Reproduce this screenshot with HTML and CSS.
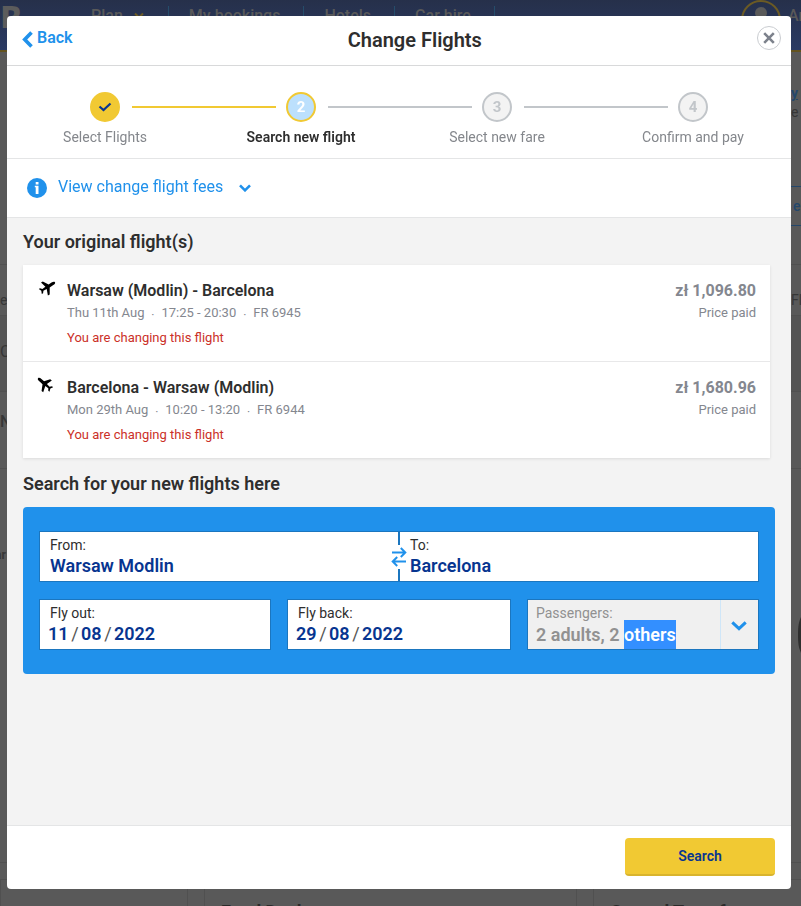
FILE: index.html
```html
<!DOCTYPE html>
<html lang="en">
<head>
<meta charset="utf-8">
<meta name="viewport" content="width=device-width, initial-scale=1">
<title>Change Flights</title>
<link rel="stylesheet" href="styles.css">
</head>
<body>
<div class="page" aria-hidden="true">
  <div class="topbar">
    <span class="logo">R</span>
    <div class="nav">
      <span class="nav-item">Plan
        <svg width="12" height="8" viewBox="0 0 12 8"><path d="M2 1.5l4 4 4-4" fill="none" stroke="#6b5a24" stroke-width="2"/></svg>
      </span>
      <span class="nav-item">My bookings</span>
      <span class="nav-item">Hotels</span>
      <span class="nav-item">Car hire</span>
    </div>
    <div class="account">
      <svg width="40" height="40" viewBox="0 0 40 40"><circle cx="20" cy="20" r="19" fill="none" stroke="#6b5a24" stroke-width="2"/><circle cx="20" cy="13" r="6" fill="#5a5a5a"/><path d="M8 31c1-8 6-10 12-10s11 2 12 10" fill="#5a5a5a"/></svg>
      <span>An</span>
    </div>
  </div>
  <div class="strip strip-intro"><span></span><div class="edge"><b class="edge-link">y</b><span>e</span></div></div>
  <div class="strip strip-button"><span></span><div class="edge edge-button">e</div></div>
  <div class="strip strip-tabs"><span>e</span><div class="edge">Fl</div></div>
  <div class="strip strip-city"><span>C</span><div class="edge"></div></div>
  <div class="strip strip-name"><span>N</span><div class="edge"></div></div>
  <div class="strip strip-seat"><b>ar</b><div class="edge edge-photo"><svg width="4" height="40" viewBox="0 0 4 40"><path d="M4 0C1 6 0 10 0 20s1 14 4 20z" fill="#2e2e2e"/></svg></div></div>
  <div class="rule"></div>
  <div class="tiles">
    <div class="tile"></div>
    <div class="tile">Food Deals</div>
    <div class="tile">Ground Transfers</div>
  </div>
</div>

<div class="overlay">
  <form class="modal" role="dialog" aria-modal="true" aria-labelledby="title">
    <header class="modal-head">
      <button type="button" class="back">
        <svg width="11" height="17" viewBox="0 0 11 17" aria-hidden="true"><path d="M9.500 1.500L2.700 8.500l6.800 7" fill="none" stroke="currentColor" stroke-width="3.600"/></svg>
        Back
      </button>
      <h1 id="title">Change Flights</h1>
      <button type="button" class="close" aria-label="Close">
        <svg width="12" height="12" viewBox="0 0 12 12" aria-hidden="true"><path d="M1.200 1.200l9.600 9.600M10.800 1.200l-9.600 9.600" stroke="currentColor" stroke-width="2.600"/></svg>
      </button>
    </header>

    <ol class="steps">
      <li class="step done">
        <div class="track"><i></i><span class="dot"><svg width="14" height="10" viewBox="0 0 14 10" aria-label="Done"><path d="M1.500 4.500L5.500 8l7-6.500" fill="none" stroke="#073590" stroke-width="2.200"/></svg></span><i></i></div>
        <span>Select Flights</span>
      </li>
      <li class="step current" aria-current="step">
        <div class="track"><i></i><span class="dot">2</span><i></i></div>
        <span>Search new flight</span>
      </li>
      <li class="step">
        <div class="track"><i></i><span class="dot">3</span><i></i></div>
        <span>Select new fare</span>
      </li>
      <li class="step">
        <div class="track"><i></i><span class="dot">4</span><i></i></div>
        <span>Confirm and pay</span>
      </li>
    </ol>

    <button type="button" class="fees" aria-expanded="false">
      <svg width="20" height="20" viewBox="0 0 20 20" aria-hidden="true"><circle cx="10" cy="10" r="10" fill="#2091eb"/><path d="M8.700 4h2.800v2.400H8.700zM7.800 7.700h3.700V16H8.700V9.200h-.9z" fill="#fff"/></svg>
      <span>View change flight fees</span>
      <svg width="12" height="8" viewBox="0 0 12 8" aria-hidden="true"><path d="M1 1.300l5 5 5-5" fill="none" stroke="#2091eb" stroke-width="2.600"/></svg>
    </button>

    <main class="body">
      <h2>Your original flight(s)</h2>
      <ul class="flights">
        <li class="flight">
          <svg class="plane" viewBox="0 0 18 18" aria-hidden="true"><path d="M17 2.200c-.8-.8-2.200-.4-3.500.4L10.600 4.500 4.800 1.500 3 2.500l4.400 4.200-3 2.300L2 8.300l-1.200.8 2.500 1.700.5 3.200 1.300-.7.300-2.500 3.300-1.900 1.200 6.600 1.800-1V7.600l3.600-2.500c1.300-.9 2.300-2.100 1.700-2.900z"/></svg>
          <div class="route">
            <h3>Warsaw (Modlin) - Barcelona</h3>
            <p class="meta"><span>Thu 11th Aug</span><i>·</i><span>17:25 - 20:30</span><i>·</i><span>FR 6945</span></p>
            <p class="notice">You are changing this flight</p>
          </div>
          <div class="price"><strong>zł 1,096.80</strong><span>Price paid</span></div>
        </li>
        <li class="flight">
          <svg class="plane plane-back" viewBox="0 0 18 18" aria-hidden="true"><path d="M17 2.200c-.8-.8-2.200-.4-3.500.4L10.600 4.500 4.800 1.500 3 2.500l4.400 4.200-3 2.300L2 8.300l-1.200.8 2.500 1.700.5 3.200 1.300-.7.300-2.500 3.300-1.900 1.200 6.600 1.800-1V7.600l3.600-2.500c1.300-.9 2.300-2.100 1.700-2.900z"/></svg>
          <div class="route">
            <h3>Barcelona - Warsaw (Modlin)</h3>
            <p class="meta"><span>Mon 29th Aug</span><i>·</i><span>10:20 - 13:20</span><i>·</i><span>FR 6944</span></p>
            <p class="notice">You are changing this flight</p>
          </div>
          <div class="price"><strong>zł 1,680.96</strong><span>Price paid</span></div>
        </li>
      </ul>

      <h2>Search for your new flights here</h2>
      <section class="search">
        <div class="airports">
          <div class="field">
            <label for="from">From:</label>
            <input id="from" type="text" value="Warsaw Modlin">
          </div>
          <div class="field">
            <label for="to">To:</label>
            <input id="to" type="text" value="Barcelona">
          </div>
          <button type="button" class="swap" aria-label="Swap airports">
            <svg width="16" height="20" viewBox="0 0 16 20" aria-hidden="true"><path d="M1 5.500h13M9.800 1l4.500 4.500L9.800 10M15 14.500H2M6.200 10l-4.500 4.500L6.200 19" fill="none" stroke="#2091eb" stroke-width="2"/></svg>
          </button>
        </div>
        <div class="details">
          <div class="field" role="group" aria-labelledby="out">
            <label id="out" for="out-day">Fly out:</label>
            <div class="date">
              <input id="out-day" type="text" value="11"><span>/</span><input type="text" value="08" aria-label="Month"><span>/</span><input class="year" type="text" value="2022" aria-label="Year">
            </div>
          </div>
          <div class="field" role="group" aria-labelledby="ret">
            <label id="ret" for="ret-day">Fly back:</label>
            <div class="date">
              <input id="ret-day" type="text" value="29"><span>/</span><input type="text" value="08" aria-label="Month"><span>/</span><input class="year" type="text" value="2022" aria-label="Year">
            </div>
          </div>
          <button type="button" class="passengers" aria-haspopup="listbox">
            <span class="pax"><span class="pax-label">Passengers:</span><span class="pax-value">2 adults, 2 <mark>others</mark></span></span>
            <span class="pax-arrow"><svg width="16" height="10" viewBox="0 0 16 10" aria-hidden="true"><path d="M1.300 1.300L8 7.700l6.700-6.400" fill="none" stroke="#2091eb" stroke-width="3"/></svg></span>
          </button>
        </div>
      </section>
    </main>

    <footer class="modal-foot">
      <button type="submit" class="submit">Search</button>
    </footer>
  </form>
</div>
</body>
</html>
```

FILE: styles.css
```css
* {
  box-sizing: border-box;
}

body,
h1,
h2,
h3,
p,
ul,
ol {
  margin: 0;
  padding: 0;
}

ul,
ol {
  list-style: none;
}

body {
  height: 100vh;
  overflow: hidden;
  background: #595959;
  color: #2e2e2e;
  font-family: Roboto, "Liberation Sans", sans-serif;
  font-size: 14px;
}

button,
input {
  border: 0;
  padding: 0;
  background: none;
  color: inherit;
  font: inherit;
}

svg {
  display: block;
  flex: none;
}

i {
  font-style: normal;
}

/* Dimmed page behind the dialog */

.page {
  height: 100vh;
  display: flex;
  flex-direction: column;
  overflow: hidden;
  color: #363636;
}

.topbar {
  display: flex;
  align-items: flex-start;
  height: 52px;
  border-bottom: 2px solid #63531f;
  background: linear-gradient(#26304a, #2a3a63);
  color: #595959;
  font-size: 16px;
  font-weight: 500;
  line-height: 20px;
}

.logo {
  width: 71px;
  font: bold 30px/36px "DejaVu Sans", sans-serif;
  color: #5c5c5c;
}

.nav {
  display: flex;
  flex: 1;
  padding-top: 6px;
}

.nav-item {
  display: flex;
  align-items: center;
  gap: 10px;
  padding: 0 23px 0 20px;
  border-right: 1px solid #254d6b;
}

.account {
  display: flex;
  gap: 7px;
  width: 60px;
  line-height: 32px;
  white-space: nowrap;
}

.strip {
  display: flex;
  flex: none;
  justify-content: space-between;
  border-bottom: 1px solid #505050;
}

.edge {
  width: 10px;
  white-space: nowrap;
}

.strip-intro {
  height: 134px;
  padding-top: 32px;
  border: 0;
  line-height: 19px;
}

.edge-link {
  display: block;
  color: #24476b;
  text-decoration: underline;
}

.strip-button {
  height: 79px;
}

.edge-button {
  height: 40px;
  padding-left: 2px;
  border: solid #24476b;
  border-width: 1px 0;
  color: #24476b;
  font-weight: 500;
  line-height: 38px;
}

.strip-tabs {
  height: 51px;
  line-height: 70px;
}

.strip-city {
  height: 76px;
  background: #545454;
  font-size: 16px;
  line-height: 72px;
}

.strip-name {
  height: 77px;
  font-size: 16px;
  font-weight: 500;
  line-height: 60px;
}

.strip-seat {
  flex: 1;
  padding-top: 78px;
  font-size: 12px;
  line-height: 16px;
}

.strip-seat b {
  margin-left: -5px;
}

.edge-photo {
  padding: 68px 0 0 7px;
}

.rule {
  height: 17px;
  border-bottom: 1px solid #505050;
}

.tiles {
  display: flex;
  gap: 16px;
  height: 26px;
}

.tile {
  flex: none;
  width: 373px;
  padding: 22px 0 0 16px;
  border: solid #505050;
  border-width: 0 1px;
  color: #2a2a2a;
  font-size: 18px;
  font-weight: 700;
  line-height: 20px;
}

.tile:first-child {
  width: 188px;
}

/* Dialog */

.overlay {
  position: fixed;
  inset: 0;
  display: flex;
  padding: 16px 10px 17px 7px;
}

.modal {
  display: flex;
  flex: 1;
  flex-direction: column;
  overflow: hidden;
  border-radius: 4px;
  background: #fff;
}

.modal-head {
  display: grid;
  grid-template-columns: auto 1fr auto;
  align-items: center;
  height: 50px;
  padding: 0 10px 2px 15px;
  border-bottom: 1px solid #d8d9da;
}

.modal-head h1 {
  font-size: 20px;
  font-weight: 600;
  line-height: 24px;
  text-align: center;
}

.back {
  display: flex;
  gap: 4px;
  align-items: center;
  padding-bottom: 4px;
  color: #2091eb;
  font-size: 16px;
  font-weight: 600;
  line-height: 20px;
}

.back svg {
  margin-top: 4px;
}

.close {
  display: grid;
  place-items: center;
  width: 24px;
  height: 24px;
  margin-bottom: 4px;
  border: 1px solid #c9ccd0;
  border-radius: 50%;
  color: #7d828c;
}

.steps {
  display: grid;
  grid-template-columns: repeat(4, 1fr);
  padding: 26px 0 13px;
  border-bottom: 1px solid #e4e5e6;
  color: #84878c;
  line-height: 16px;
  text-align: center;
}

.track {
  display: flex;
  align-items: center;
  margin: 0 -1px 7px 1px;
}

.track i {
  flex: 1;
  height: 2px;
  margin: 0 10px 0 0;
  background: #c2c6ca;
}

.track i:last-child {
  margin: 0 0 0 12px;
}

.step:first-child i:first-child,
.step:last-child i:last-child {
  visibility: hidden;
}

.dot {
  display: grid;
  place-items: center;
  width: 30px;
  height: 30px;
  border: 2px solid #c2c6ca;
  border-radius: 50%;
  background: #f3f3f3;
  color: #c2c6ca;
  font-size: 15px;
  font-weight: 700;
}

.done i,
.current i:first-child {
  background: #f1c933;
}

.done .dot {
  border-color: #f1c933;
  background: #f1c933;
}

.current {
  color: #2e2e2e;
  font-weight: 600;
}

.current .dot {
  border-color: #f1c933;
  background: #bce0fd;
  color: #fff;
}

.fees {
  display: flex;
  align-items: center;
  gap: 11px;
  height: 59px;
  padding: 0 20px;
  border-bottom: 1px solid #e4e5e6;
  color: #2091eb;
  font-size: 16px;
  line-height: 20px;
}

.fees span {
  margin: 0 5px 3px 0;
}

.body {
  flex: 1;
  padding: 12px 16px 0;
  background: #f3f3f3;
}

.body h2 {
  font-size: 18px;
  font-weight: 600;
  line-height: 24px;
}

.flights {
  margin: 11px 5px 14px 0;
  background: #fff;
  box-shadow: 0 1px 3px rgba(0, 0, 0, 0.1);
}

.flight {
  display: flex;
  padding: 15px 14px 14px 15px;
}

.flight + .flight {
  border-top: 1px solid #e8e8e9;
}

.plane {
  width: 18px;
  height: 18px;
  margin-right: 11px;
  fill: #000;
}

.plane-back {
  margin: 0 13px 0 -2px;
  transform: scaleX(-1) rotate(-8deg);
}

.route {
  flex: 1;
}

.flight h3,
.price strong {
  font-size: 16px;
  font-weight: 600;
  line-height: 22px;
}

.meta,
.price span {
  color: #84878f;
  font-size: 13px;
  line-height: 22px;
}

.meta i {
  display: inline-block;
  width: 17px;
  font-size: 12px;
  line-height: 16px;
  text-align: center;
  vertical-align: -2px;
}

.notice {
  margin-top: 4px;
  color: #cb3028;
  font-size: 13px;
  line-height: 19px;
}

.price {
  display: flex;
  flex-direction: column;
  text-align: right;
}

.price strong {
  color: #84878f;
  font-weight: 700;
}

.search {
  display: grid;
  gap: 17px;
  margin-top: 11px;
  padding: 24px 16px;
  border-radius: 4px;
  background: #2091eb;
}

.airports {
  position: relative;
  display: grid;
  grid-template-columns: 1fr 1fr;
}

.field {
  min-width: 0;
  height: 51px;
  padding: 3px 10px 0;
  border: 1px solid #1b76bf;
  background: #fff;
}

.field label {
  display: block;
  line-height: 20px;
}

.field input {
  display: block;
  width: 100%;
  height: 22px;
  color: #073590;
  font-size: 18px;
  font-weight: 600;
  line-height: 22px;
}

.swap {
  position: absolute;
  top: 50%;
  left: 50%;
  padding: 2px 0;
  background: #fff;
  transform: translate(-50%, -50%);
}

.details {
  display: grid;
  grid-template-columns: 232fr 224fr 232fr;
  gap: 16px;
}

.date {
  display: flex;
  margin-left: -2px;
  font-size: 18px;
  line-height: 22px;
}

.field .date input {
  width: 21px;
}

.field .date .year {
  width: 44px;
}

.date span {
  width: 12px;
  color: #555;
  text-align: center;
}

.passengers {
  display: flex;
  height: 51px;
  border: 1px solid #1b76bf;
  background: #f0f0f0;
  color: #919191;
  text-align: left;
}

.pax {
  display: flex;
  flex: 1;
  flex-direction: column;
  padding: 4px 0 0 8px;
}

.pax-label {
  height: 16px;
  line-height: 18px;
}

.pax-value {
  font-size: 18px;
  font-weight: 600;
  line-height: 29px;
  white-space: nowrap;
}

.pax-value mark {
  display: inline-block;
  background: #338fff;
  color: #fff;
}

.pax-arrow {
  display: grid;
  place-items: center;
  align-self: stretch;
  width: 38px;
  padding: 2px 2px 0 0;
  border-left: 1px solid #cfe6f8;
}

.modal-foot {
  display: flex;
  justify-content: flex-end;
  height: 64px;
  padding: 12px 16px;
  border-top: 1px solid #e4e5e6;
}

.submit {
  width: 150px;
  height: 38px;
  border-bottom: 2px solid #d9b42d;
  border-radius: 4px;
  background: #f1c933;
  color: #073590;
  font-size: 14px;
  font-weight: 600;
}
```
